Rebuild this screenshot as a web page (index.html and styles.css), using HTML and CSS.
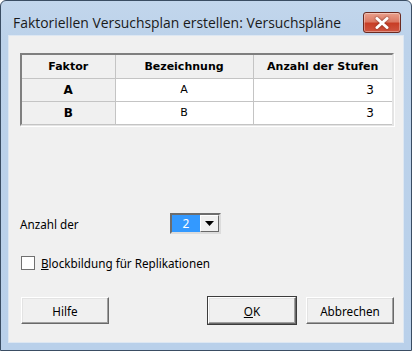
FILE: index.html
```html
<!DOCTYPE html>
<html lang="de">
<head>
<meta charset="utf-8">
<link rel="stylesheet" href="styles.css">
</head>
<body>
<div class="window">
  <div class="titlebar">
    <span class="title">Faktoriellen Versuchsplan erstellen: Versuchspläne</span>
    <div class="close">
      <svg width="16" height="12" viewBox="0 0 16 12"><path d="M3 1.5 L13 10.5 M13 1.5 L3 10.5" stroke="#fff" stroke-width="3" stroke-linecap="round"/></svg>
    </div>
  </div>
  <div class="client">
    <div class="grid-frame">
      <table class="grid">
        <thead>
          <tr><th class="c1">Faktor</th><th class="c2">Bezeichnung</th><th class="c3">Anzahl der Stufen</th></tr>
        </thead>
        <tbody>
          <tr><th>A</th><td class="name">A</td><td class="num">3</td></tr>
          <tr><th>B</th><td class="name">B</td><td class="num">3</td></tr>
        </tbody>
      </table>
    </div>
    <div class="field-row">
      <span class="label">Anzahl der</span>
      <div class="combo">
        <span class="combo-value">2</span>
        <span class="combo-btn"><svg width="9" height="5" viewBox="0 0 9 5"><path d="M0 0 H9 L4.5 5 Z" fill="#000"/></svg></span>
      </div>
    </div>
    <label class="check-row">
      <span class="checkbox"></span>
      <span class="check-label"><u>B</u>lockbildung für Replikationen</span>
    </label>
    <div class="buttons">
      <button class="btn">Hilfe</button>
      <button class="btn btn-default push"><u>O</u>K</button>
      <button class="btn">Abbrechen</button>
    </div>
  </div>
</div>
</body>
</html>
```

FILE: styles.css
```css
* { box-sizing: border-box; }
html, body { margin: 0; padding: 0; }
body {
  width: 412px;
  height: 351px;
  overflow: hidden;
  background: #fff;
  font-family: "Noto Sans", "DejaVu Sans", sans-serif;
}
.window {
  width: 412px;
  height: 351px;
  border: 1px solid #3a4d63;
  border-radius: 6px 6px 0 0;
  background: linear-gradient(to bottom, #c2d6ec 0px, #bcd2ea 40px, #b9d0ea 100%);
  display: flex;
  flex-direction: column;
}
.titlebar {
  height: 34px;
  display: flex;
  align-items: flex-start;
  justify-content: space-between;
  padding-left: 12px;
  flex: none;
}
.title {
  font-family: "Open Sans", "Noto Sans", sans-serif;
  font-size: 13.9px;
  color: #1a1a1a;
  margin-top: 12px;
  line-height: 20px;
}
.close {
  width: 38px;
  height: 21px;
  margin-top: 11px;
  margin-right: 10px;
  border: 1px solid #6b2a20;
  border-radius: 3px;
  background: linear-gradient(to bottom, #eaa08c 0%, #dc7a64 45%, #c83e26 55%, #cf5540 100%);
  display: flex;
  align-items: center;
  justify-content: center;
  box-shadow: inset 0 0 0 1px rgba(255,255,255,0.35);
}
.close svg { filter: drop-shadow(0 0 1px #7a2a1c); }
.client {
  flex: 1;
  margin: 0 7px 7px 7px;
  background: #f0f0f0;
  border: 1px solid #dde7f2;
  padding: 17px 9px 0 11px;
  display: flex;
  flex-direction: column;
  font-size: 11.7px;
  color: #000;
}
.grid-frame {
  height: 73px;
  border-style: solid;
  border-width: 2px;
  border-color: #7f7f7f #e4e4e4 #e4e4e4 #7f7f7f;
  background: #f0f0f0;
  box-shadow: 1px 1px 0 #fff;
}
.grid {
  width: 100%;
  border-collapse: collapse;
  font-family: "DejaVu Sans", sans-serif;
  font-size: 11px;
}
.grid th, .grid td {
  border: 1px solid #c4c4c4;
  padding: 0 4px;
}
.grid tr:first-child th { border-top: none; }
.grid tr th:first-child { border-left: none; }
.grid th:last-child, .grid td:last-child { border-right: none; }
.grid thead th {
  height: 23px;
  font-weight: bold;
  background: #f0f0f0;
  text-align: center;
}
.grid tbody th {
  height: 23px;
  font-weight: bold;
  background: #f0f0f0;
  font-size: 12px;
}
.grid tbody td { background: #fff; }
.grid .c1 { width: 93px; }
.grid .c2 { width: 138px; }
.grid td.name { text-align: center; font-family: "DejaVu Sans", sans-serif; }
.grid td.num { text-align: right; padding-right: 18px; font-size: 12px; }
.field-row {
  margin-top: 87px;
  display: grid;
  grid-template-columns: 150px auto;
  align-items: center;
  height: 21px;
}
.combo {
  width: 51px;
  height: 21px;
  border-style: solid;
  border-width: 2px;
  border-color: #6d6d6d #dcdcdc #dcdcdc #6d6d6d;
  display: flex;
  background: #fff;
}
.combo-value {
  width: 28px;
  background: #3399ff;
  color: #fff;
  text-align: center;
  line-height: 17px;
  font-size: 12px;
}
.combo-btn {
  flex: 1;
  background: #f0f0f0;
  border-style: solid;
  border-width: 1px;
  border-color: #fff #696969 #696969 #fff;
  display: flex;
  align-items: center;
  justify-content: center;
}
.check-row {
  margin-top: 22px;
  display: flex;
  align-items: center;
  height: 14px;
  margin-left: 1px;
}
.checkbox {
  width: 14px;
  height: 14px;
  border: 1px solid #707070;
  background: #fff;
  margin-right: 6px;
}
.check-label u { text-decoration-thickness: 1px; }
.buttons {
  margin-top: 27px;
  display: flex;
  gap: 10px;
  padding-left: 1px;
}
.push { margin-left: auto; }
.btn {
  width: 88px;
  height: 27px;
  font-family: "Noto Sans", "DejaVu Sans", sans-serif;
  font-size: 11.7px;
  color: #000;
  background: #f0f0f0;
  border-style: solid;
  border-width: 1px;
  border-color: #fff #696969 #696969 #fff;
  box-shadow: inset -1px -1px 0 #a0a0a0, inset 1px 1px 0 #e3e3e3;
  padding: 0;
}
.btn-default {
  outline: 1px solid #3c3c3c;
  outline-offset: 0;
}
```
